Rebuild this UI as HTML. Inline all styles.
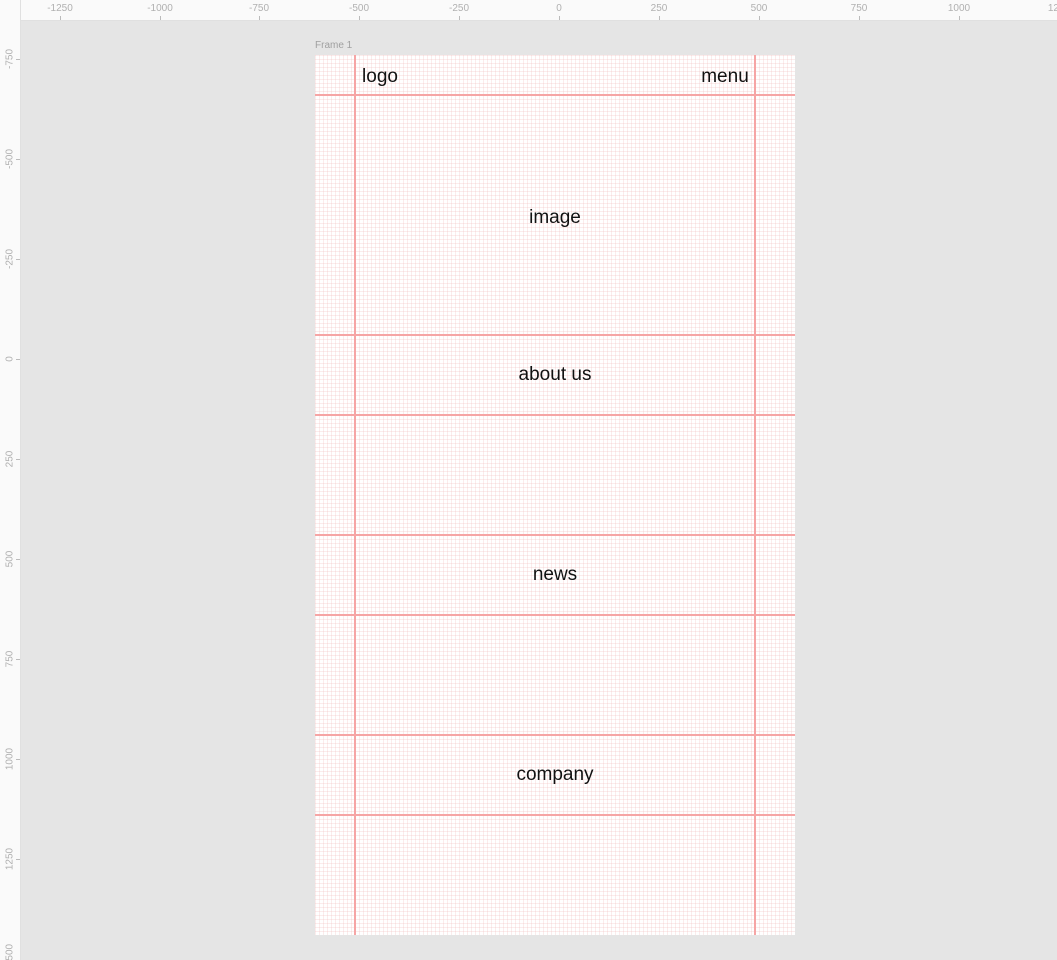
<!DOCTYPE html>
<html><head><style>
*{margin:0;padding:0}
html,body{width:1057px;height:960px;overflow:hidden}
body{background:#e5e5e5;position:relative;font-family:"Liberation Sans",sans-serif}
.rt{position:absolute;left:0;top:0;width:1057px;height:20px;background:#fafafa;border-bottom:1px solid #e0e0e0}
.rl{position:absolute;left:0;top:0;width:20px;height:960px;background:#fafafa;border-right:1px solid #e0e0e0}
.tl{position:absolute;top:3px;font-size:10px;color:#b0b0b0;transform:translateX(-50%)}
.tk{position:absolute;top:16px;width:1px;height:4px;background:#bbb}
.vl{position:absolute;left:10px;font-size:10px;color:#b0b0b0;transform:translate(-50%,-50%) rotate(-90deg);white-space:nowrap}
.vk{position:absolute;left:16px;height:1px;width:4px;background:#bbb}
.frame{position:absolute;left:315px;top:55px;width:480px;height:880px;background-color:#fff;
background-image:linear-gradient(to right,rgba(240,180,180,.25) 1px,transparent 1px),linear-gradient(to bottom,rgba(240,180,180,.25) 1px,transparent 1px);background-size:4px 4px}
.v{position:absolute;top:0;width:2px;height:880px;background:#f6a5a5}
.h{position:absolute;left:0;width:480px;height:2px;background:#f6a5a5}
.t{position:absolute;font-size:19px;color:#111;transform:translate(-50%,-50%);white-space:nowrap}
</style></head><body>
<div class="rt">
<span class="tl" style="left:60px">-1250</span><span class="tl" style="left:160px">-1000</span><span class="tl" style="left:259px">-750</span><span class="tl" style="left:359px">-500</span><span class="tl" style="left:459px">-250</span><span class="tl" style="left:559px">0</span><span class="tl" style="left:659px">250</span><span class="tl" style="left:759px">500</span><span class="tl" style="left:859px">750</span><span class="tl" style="left:959px">1000</span><span class="tl" style="left:1059px">1250</span>
<i class="tk" style="left:60px"></i><i class="tk" style="left:160px"></i><i class="tk" style="left:259px"></i><i class="tk" style="left:359px"></i><i class="tk" style="left:459px"></i><i class="tk" style="left:559px"></i><i class="tk" style="left:659px"></i><i class="tk" style="left:759px"></i><i class="tk" style="left:859px"></i><i class="tk" style="left:959px"></i>
</div>
<div class="rl">
<span class="vl" style="top:59px">-750</span><span class="vl" style="top:159px">-500</span><span class="vl" style="top:259px">-250</span><span class="vl" style="top:359px">0</span><span class="vl" style="top:459px">250</span><span class="vl" style="top:559px">500</span><span class="vl" style="top:659px">750</span><span class="vl" style="top:759px">1000</span><span class="vl" style="top:859px">1250</span><span class="vl" style="top:955px">1500</span>
<i class="vk" style="top:59px"></i><i class="vk" style="top:159px"></i><i class="vk" style="top:259px"></i><i class="vk" style="top:359px"></i><i class="vk" style="top:459px"></i><i class="vk" style="top:559px"></i><i class="vk" style="top:659px"></i><i class="vk" style="top:759px"></i><i class="vk" style="top:859px"></i>
</div>
<div style="position:absolute;left:315px;top:40px;font-size:10px;color:#a0a0a0">Frame 1</div>
<div class="frame">
<div class="v" style="left:39px"></div><div class="v" style="left:439px"></div>
<div class="h" style="top:39px"></div><div class="h" style="top:279px"></div><div class="h" style="top:359px"></div><div class="h" style="top:479px"></div><div class="h" style="top:559px"></div><div class="h" style="top:679px"></div><div class="h" style="top:759px"></div>
<span class="t" style="left:65px;top:22px">logo</span>
<span class="t" style="left:410px;top:22px">menu</span>
<span class="t" style="left:240px;top:163px">image</span>
<span class="t" style="left:240px;top:320px">about us</span>
<span class="t" style="left:240px;top:520px">news</span>
<span class="t" style="left:240px;top:720px">company</span>
</div>
</body></html>
